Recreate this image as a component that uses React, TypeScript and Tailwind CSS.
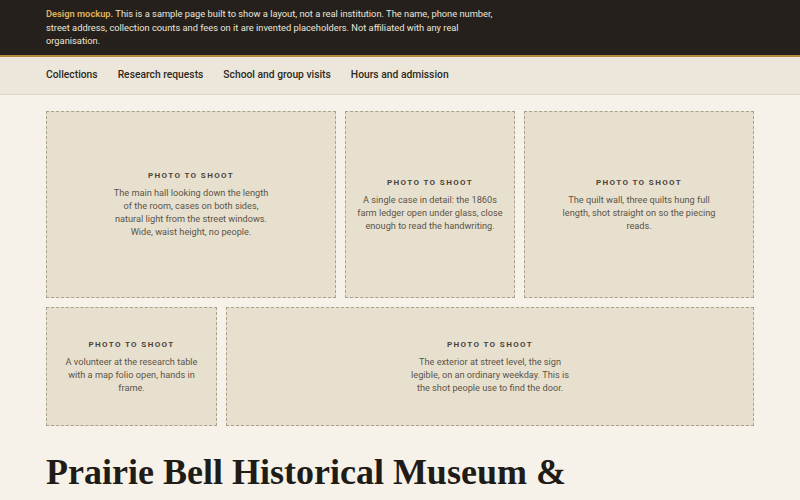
import React from "react";

const topRow = [
  "The main hall looking down the length of the room, cases on both sides, natural light from the street windows. Wide, waist height, no people.",
  "A single case in detail: the 1860s farm ledger open under glass, close enough to read the handwriting.",
  "The quilt wall, three quilts hung full length, shot straight on so the piecing reads.",
];

const bottomRow = [
  "A volunteer at the research table with a map folio open, hands in frame.",
  "The exterior at street level, the sign legible, on an ordinary weekday. This is the shot people use to find the door.",
];

function PhotoSlot({ text }: { text: string }) {
  return (
    <div className="flex flex-col items-center justify-center border border-dashed border-[#aaa08c] bg-[#e8e0cf] px-[10px] text-center">
      <p className="text-[8px] font-bold uppercase tracking-[0.17em] text-[#4a443a]">
        Photo to shoot
      </p>
      <p className="mt-[4px] max-w-[160px] text-[9.2px] leading-[13px] text-[#5b5448]">
        {text}
      </p>
    </div>
  );
}

export default function App() {
  const navItems = [
    "Collections",
    "Research requests",
    "School and group visits",
    "Hours and admission",
  ];

  return (
    <div className="min-h-screen bg-[#f6f2ea] font-['Roboto',sans-serif] text-[#25201a]">
      {/* mockup notice */}
      <div className="border-b-2 border-[#b08a3e] bg-[#25201b]">
        <p className="mx-[46px] max-w-[460px] py-[7px] text-[9.3px] leading-[13.5px] text-[#ece6da]">
          <span className="font-semibold text-[#e0b45a]">Design mockup.</span>{" "}
          This is a sample page built to show a layout, not a real institution. The
          name, phone number, street address, collection counts and fees on it are
          invented placeholders. Not affiliated with any real organisation.
        </p>
      </div>

      {/* site nav */}
      <nav className="border-b border-[#ddd5c6] bg-[#ede7db]">
        <ul className="mx-[46px] flex h-[37px] items-center gap-[20px] text-[10.3px] font-medium text-[#2e2922]">
          {navItems.map((item) => (
            <li key={item}>{item}</li>
          ))}
        </ul>
      </nav>

      <main className="mx-[46px] pt-[16px]">
        <div className="grid h-[187px] grid-cols-[290px_170px_1fr] gap-[9px]">
          {topRow.map((text) => (
            <PhotoSlot key={text} text={text} />
          ))}
        </div>
        <div className="mt-[9px] grid h-[119px] grid-cols-[171px_1fr] gap-[9px]">
          {bottomRow.map((text) => (
            <PhotoSlot key={text} text={text} />
          ))}
        </div>

        <h1 className="mt-[24px] max-w-[560px] font-['Liberation_Serif',serif] text-[36px] font-bold leading-[44px] text-[#1f1b16]">
          Prairie Bell Historical Museum &amp; Archive
        </h1>
      </main>
    </div>
  );
}
